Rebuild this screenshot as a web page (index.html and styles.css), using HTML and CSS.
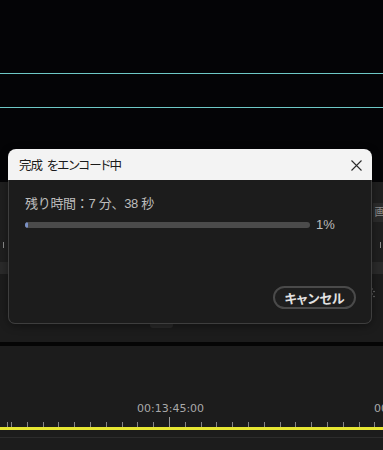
FILE: index.html
```html
<!DOCTYPE html>
<html lang="ja">
<head>
    <meta charset="UTF-8">
    <meta name="viewport" content="width=device-width, initial-scale=1.0">
    <title>完成 をエンコード中</title>
    <link rel="stylesheet" href="styles.css">
</head>
<body>
    <div class="screen">
        <div class="preview">
            <div class="guide"></div>
            <div class="guide guide-low"></div>
        </div>

        <div class="panel">
            <div class="panel-top">
                <span class="edge-tick"></span>
                <span class="side-tab">画</span>
                <span class="edge-tick"></span>
            </div>
            <div class="panel-bar"></div>
            <div class="panel-bottom">
                <div class="handle"></div>
                <svg class="grip" width="4" height="10" viewBox="0 0 4 10">
                    <circle cx="1" cy="1" r="0.8" fill="#777"/>
                    <circle cx="3" cy="3.5" r="0.8" fill="#777"/>
                    <circle cx="1" cy="6" r="0.8" fill="#777"/>
                    <circle cx="3" cy="8.5" r="0.8" fill="#777"/>
                </svg>
            </div>
        </div>

        <div class="divider"></div>

        <div class="timeline">
            <div class="labels">
                <span class="timecode">00:13:45:00</span>
                <span class="timecode">00:14:00:00</span>
            </div>
            <div class="ruler">
                <span class="major"></span>
                <span class="major"></span>
            </div>
            <div class="playhead-line"></div>
            <div class="track-line"></div>
        </div>

        <div class="dialog">
            <div class="dialog-title">
                <span class="title-text">完成 をエンコード中</span>
                <svg class="close" width="11" height="11" viewBox="0 0 11 11">
                    <path d="M0.5 0.5 L10.5 10.5 M10.5 0.5 L0.5 10.5" stroke="#2b2b2b" stroke-width="1.1" fill="none"/>
                </svg>
            </div>
            <div class="dialog-body">
                <div class="remaining">残り時間：7 分、38 秒</div>
                <div class="progress-row">
                    <div class="progress">
                        <div class="progress-fill" style="width: 1%"></div>
                    </div>
                    <span class="percent">1%</span>
                </div>
                <div class="dialog-footer">
                    <button class="cancel">キャンセル</button>
                </div>
            </div>
        </div>
    </div>
</body>
</html>
```

FILE: styles.css
```css
body {
    margin: 0;
    background-color: #040406;
    font-family: "Liberation Sans", "Noto Sans CJK JP", sans-serif;
}

.screen {
    position: relative;
    width: 383px;
    height: 450px;
    overflow: hidden;
}

/* program monitor */
.preview {
    height: 182px;
    padding-top: 73px;
    box-sizing: border-box;
    background-color: #040406;
}

.guide {
    height: 1px;
    background-color: #6ec8c6;
}

.guide-low {
    margin-top: 33px;
}

/* panel behind the dialog */
.panel {
    height: 160px;
    display: flex;
    flex-direction: column;
}

.panel-top {
    height: 80px;
    background-color: #1f1f1f;
    display: flex;
    justify-content: space-between;
    align-items: flex-start;
    padding: 0 0 0 3px;
    position: relative;
}

.edge-tick {
    width: 1px;
    height: 6px;
    margin-top: 60px;
    background-color: #8a8a8a;
}

.side-tab {
    position: absolute;
    right: -4px;
    top: 21px;
    width: 14px;
    height: 19px;
    background-color: #2b2b2b;
    color: #8a8a8a;
    font-size: 11px;
    line-height: 19px;
    text-align: center;
}

.panel-top .edge-tick:last-child {
    margin-right: 2px;
}

.panel-bar {
    height: 12px;
    background-color: #2a2a2a;
}

.panel-bottom {
    flex: 1;
    background-color: #1c1c1c;
    position: relative;
}

.handle {
    width: 23px;
    height: 6px;
    margin: 48px 0 0 150px;
    background-color: #2a2a2a;
    border-radius: 0 0 3px 3px;
}

.grip {
    position: absolute;
    right: 8px;
    top: 14px;
}

.divider {
    height: 4px;
    background-color: #050505;
}

/* timeline ruler */
.timeline {
    height: 104px;
    background-color: #1c1c1c;
    padding-top: 56px;
    box-sizing: border-box;
}

.labels {
    display: flex;
    gap: 169px;
    padding-left: 137px;
    height: 13px;
    white-space: nowrap;
}

.timecode {
    width: 68px;
    flex: none;
    font-family: "DejaVu Sans", sans-serif;
    font-size: 11px;
    line-height: 13px;
    color: #a9a9a9;
}

.ruler {
    height: 12px;
    display: flex;
    align-items: flex-end;
    gap: 236px;
    padding-left: 169px;
    background-image: repeating-linear-gradient(to right, #858585 0 1px, transparent 1px 15.8px);
    background-size: 100% 5px;
    background-position: 11px bottom;
    background-repeat: repeat-x;
}

.major {
    width: 1px;
    height: 10px;
    background-color: #9a9a9a;
    flex: none;
}

.playhead-line {
    height: 3px;
    background-color: #e6e633;
}

.track-line {
    height: 1px;
    margin-top: 7px;
    background-color: #2c2c2c;
}

/* encoding dialog */
.dialog {
    position: absolute;
    left: 8px;
    top: 149px;
    width: 364px;
    display: flex;
    flex-direction: column;
    border-radius: 8px;
    box-shadow: 0 2px 8px rgba(0, 0, 0, 0.4);
}

.dialog-title {
    height: 31px;
    background-color: #f3f3f3;
    border-radius: 8px 8px 0 0;
    display: flex;
    align-items: center;
    justify-content: space-between;
    padding: 0 10px 0 11px;
}

.title-text {
    font-family: "Noto Sans CJK JP", sans-serif;
    font-feature-settings: "palt";
    font-size: 12.5px;
    letter-spacing: -1px;
    word-spacing: 3px;
    color: #1a1a1a;
}

.close {
    margin-top: 1px;
}

.dialog-body {
    height: 144px;
    box-sizing: border-box;
    background-color: #1c1c1c;
    border: 1px solid #3e3e3e;
    border-top: none;
    border-radius: 0 0 7px 7px;
    padding: 14px 15px 14px 16px;
    display: flex;
    flex-direction: column;
}

.remaining {
    font-size: 13px;
    line-height: 20px;
    letter-spacing: -0.3px;
    color: #bdbdbd;
}

.progress-row {
    display: flex;
    align-items: center;
    gap: 6px;
    margin-top: 3px;
}

.progress {
    width: 285px;
    height: 6px;
    border-radius: 3px;
    background-color: #4b4b4b;
    overflow: hidden;
}

.progress-fill {
    height: 100%;
    min-width: 3px;
    background-color: #7a90c4;
    border-radius: 3px;
}

.percent {
    font-size: 13px;
    color: #bdbdbd;
}

.dialog-footer {
    margin-top: auto;
    display: flex;
    justify-content: flex-end;
}

.cancel {
    width: 83px;
    height: 23px;
    padding: 0;
    border: 2px solid #4a4a4a;
    border-radius: 12px;
    background-color: #1e1e1e;
    color: #e2e2e2;
    font-family: "Noto Sans CJK JP", sans-serif;
    font-feature-settings: "palt";
    font-size: 13px;
    font-weight: bold;
    line-height: 19px;
}
```
